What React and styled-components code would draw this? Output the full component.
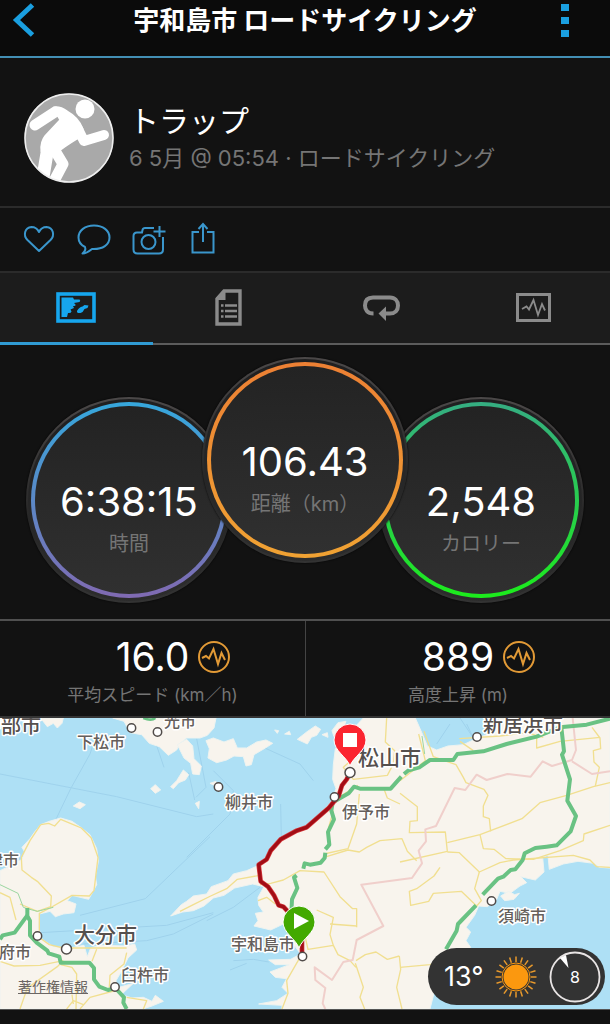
import React, { useState } from "react";
import styled, { createGlobalStyle } from "styled-components";

const GlobalStyle = createGlobalStyle`
  body {
    margin: 0;
    background: #121212;
    font-family: Inter, "Noto Sans CJK JP", sans-serif;
  }

  * {
    box-sizing: border-box;
  }
`;

const Page = styled.main`
  display: flex;
  flex-direction: column;
  min-height: 100vh;
  background: #121212;
  color: #fff;
`;

const IconButton = styled.button`
  display: flex;
  padding: 0;
  border: 0;
  background: none;
  color: ${(props) => props.$color || "#1a9fe0"};
  cursor: pointer;
`;

const Header = styled.header`
  display: grid;
  grid-template-columns: 1fr auto 1fr;
  align-items: start;
  height: 58px;
  padding: 2px 40px 0 12px;
  background: #0b0b0b;
  border-bottom: 2px solid #438fb4;

  ${IconButton}:last-child {
    justify-self: end;
  }
`;

const Title = styled.h1`
  margin: 0 0 0 28px;
  font-size: 26px;
  font-weight: 700;
  line-height: 38px;
`;

const Profile = styled.section`
  display: flex;
  align-items: center;
  gap: 15px;
  height: 150px;
  padding: 12px 24px 0;
  border-bottom: 2px solid #2b2b2b;
`;

const Avatar = styled.svg`
  flex: none;
  width: 90px;
  height: 90px;
`;

const Name = styled.h2`
  margin: 0;
  font-size: 30px;
  font-weight: 400;
  line-height: 40px;
`;

const Subtitle = styled.p`
  margin: 0;
  color: #757575;
  font-size: 22px;
  font-weight: 400;
  line-height: 34px;
`;

const Actions = styled.div`
  display: flex;
  align-items: center;
  gap: 20px;
  height: 65px;
  padding: 0 22px 2px;
  border-bottom: 2px solid #2b2b2b;
`;

const Tabs = styled.div`
  display: grid;
  grid-template-columns: repeat(4, 1fr);
  height: 72px;
  background: #1c1c1c;
  box-shadow: inset 0 -2px #5c5c5c;
`;

const Tab = styled.button`
  display: flex;
  align-items: center;
  justify-content: center;
  padding: 0;
  border: 0;
  border-bottom: 3px solid ${(props) => (props.$active ? "#309bd3" : "transparent")};
  background: none;
  color: ${(props) => (props.$active ? "#16a6ee" : "#8b8b8b")};
  cursor: pointer;
`;

const Dials = styled.section`
  display: flex;
  justify-content: center;
  align-items: flex-end;
  height: 276px;
  padding-bottom: 16px;
  border-bottom: 2px solid #505050;
`;

const Dial = styled.div`
  position: relative;
  z-index: ${(props) => (props.$raised ? 1 : 0)};
  flex: none;
  width: 206px;
  height: 206px;
  margin: 0 -15px ${(props) => (props.$raised ? "40px" : "0")};
  padding: 3px;
  border: 2px solid transparent;
  border-radius: 50%;
  background:
    linear-gradient(#1f1f20, #2c2c2c) padding-box,
    linear-gradient(#4b4848, #262626 60%, #333) border-box;
  box-shadow: 0 0 2px #000;
`;

const Ring = styled.div`
  display: flex;
  flex-direction: column;
  align-items: center;
  height: 100%;
  padding-top: 71px;
  border: 4px solid transparent;
  border-radius: 50%;
  background:
    linear-gradient(#232323, #303030) padding-box,
    linear-gradient(${(props) => props.$from}, ${(props) => props.$to}) border-box;
`;

const DialValue = styled.div`
  font-size: 40px;
  line-height: 50px;
  white-space: nowrap;
`;

const DialLabel = styled.div`
  color: #757575;
  font-size: 20px;
  font-weight: 400;
  line-height: 34px;
  white-space: nowrap;
`;

const Stats = styled.section`
  display: grid;
  grid-template-columns: 1fr 1fr;
  height: 97px;
  border-bottom: 2px solid #343434;
`;

const Stat = styled.div`
  display: flex;
  flex-direction: column;
  align-items: center;
  padding-top: 14px;

  & + & {
    border-left: 1px solid #444;
  }
`;

const StatValue = styled.div`
  position: relative;
  font-size: 39px;
  line-height: 44px;

  svg {
    position: absolute;
    left: 100%;
    top: 6px;
    margin-left: 9px;
  }
`;

const StatLabel = styled.div`
  color: #757575;
  font-size: 17px;
  font-weight: 400;
  line-height: 32px;
`;

const MapArea = styled.section`
  position: relative;
  border-bottom: 1px solid #555;
`;

const MapSvg = styled.svg`
  display: block;
  width: 100%;
  height: auto;
  background: #aee0f5;
`;

const MapText = styled.text`
  fill: ${(props) => (props.$size > 16 ? "#55504e" : "#655f5c")};
  stroke: #fff;
  stroke-width: 3px;
  stroke-linejoin: round;
  paint-order: stroke;
  font-size: ${(props) => props.$size}px;
  font-weight: 500;
`;

const Legal = styled.a`
  position: absolute;
  left: 18px;
  bottom: 12px;
  color: #6b6663;
  font-size: 14px;
  line-height: 20px;
`;

const Weather = styled.div`
  position: absolute;
  right: 5px;
  bottom: 4px;
  display: flex;
  align-items: center;
  justify-content: space-between;
  width: 177px;
  height: 57px;
  padding: 0 4px 0 16px;
  border-radius: 29px;
  background: #333;
  font-size: 27px;
  font-weight: 400;
`;

const Compass = styled.div`
  position: relative;
  display: flex;
  align-items: center;
  justify-content: center;
  width: 52px;
  height: 52px;
  font-size: 16px;

  svg {
    position: absolute;
    inset: 0;
  }
`;

const PulseBadge = () => (
  <svg width="32" height="32" viewBox="0 0 32 32" fill="none" stroke="#e29a36" strokeWidth="2">
    <circle cx="16" cy="16" r="15" />
    <path d="M4 17 L8 15 L11 17.5 L15.500 8 L20 23 L23.500 12 L27 19" />
  </svg>
);

const MapIcon = () => (
  <svg width="40" height="31" viewBox="0 0 40 31">
    <rect x="2" y="2" width="36" height="27" fill="none" stroke="currentColor" strokeWidth="3.600" />
    <path
      fill="currentColor"
      d="M5.500 5.500 H17 L18 7.500 H23.500 Q25 8.500 23.500 10 L18 11 L19.500 12.500 Q20 14 17 14 L18 16 L14.500 17.500 L15.500 19.500 Q15 21.500 12 21 L11 25 H5.500 Z M21 19 Q23 15 26.500 14.500 L28.500 13 L32.500 13.500 L31.500 16 L28.500 17 Q27 20.500 24.500 21 Q20.500 21.500 21 19 Z"
    />
  </svg>
);

const ReportIcon = () => (
  <svg width="27" height="37" viewBox="0 0 27 37" fill="none" stroke="currentColor">
    <path d="M9 2 H25 V35 H2 V10 Z" strokeWidth="3.400" />
    <path d="M10.500 1 V11 H1 V9 Z" fill="currentColor" stroke="none" />
    <path d="M6 16.500 h2.500 M10 16.500 h12 M6 22 h2.500 M10 22 h12 M6 27.500 h2.500 M10 27.500 h12" strokeWidth="2.600" />
  </svg>
);

const LapIcon = () => (
  <svg width="37" height="26" viewBox="0 0 37 26" fill="none" stroke="currentColor">
    <path d="M10.500 18.500 C4 18.500 2 14.500 2 10.500 C2 5 5 2.500 10 2.500 H27 C32 2.500 35 6 35 10.500 C35 15.500 32 18.500 27 18.500 H22" strokeWidth="4" />
    <path d="M15.500 18.500 L23 11.500 V26 Z" fill="currentColor" stroke="none" />
  </svg>
);

const ChartIcon = () => (
  <svg width="35" height="29" viewBox="0 0 35 29" fill="none" stroke="currentColor">
    <rect x="1.500" y="1.500" width="32" height="26" strokeWidth="3" />
    <path d="M6 16 L10.500 13.500 L13 16.500 L17.500 7 L22 22 L26 11 L29 17.500" strokeWidth="1.800" />
  </svg>
);

const cities = [
  { name: "宇部市", x: -19, y: 15, size: 20 },
  { name: "下松市", x: 77, y: 30, dot: [131.500, 10] },
  { name: "光市", x: 164, y: 9, dot: [157.500, 14] },
  { name: "中津市", x: -29, y: 148 },
  { name: "大分市", x: 74, y: 224, size: 21, dot: [66.500, 231], big: true },
  { name: "別府市", x: -17, y: 240, dot: [37.500, 218] },
  { name: "臼杵市", x: 121, y: 263, dot: [115, 269] },
  { name: "柳井市", x: 225, y: 90, dot: [218.500, 69] },
  { name: "宇和島市", x: 231, y: 232, dot: [302.500, 238.500] },
  { name: "伊予市", x: 342, y: 100, dot: [334.500, 79] },
  { name: "松山市", x: 358, y: 47, size: 21, dot: [350, 54.500], big: true },
  { name: "新居浜市", x: 483, y: 14, size: 20, dot: [477, 19] },
  { name: "須崎市", x: 498, y: 204, dot: [491.500, 183] },
];

const land = [
  // Yamaguchi coast
  "M0 12 H52 L40 30 L18 24 L0 34 Z",
  "M100 12 H190 L186 28 L172 42 L160 28 L142 38 L128 20 Z",
  "M338 12 L372 22 L390 56 L425 62 L448 88 L478 98 L505 124 L530 108 L540 88 L560 72 L600 72 L622 64 L642 42 L648 12 Z",
  "M532 92 L560 76 L578 96 L582 134 L604 156 L598 182 L578 180 L572 148 L552 132 Z",
  "M550 168 L566 182 L556 198 L536 206 L520 224 L512 218 L530 200 Z",
  "M452 224 L466 212 L482 228 L466 238 Z M220 276 L238 264 L256 272 L240 284 Z M586 268 L598 262 L596 284 Z",
  "M618 80 L640 72 L672 84 L700 74 L712 102 L740 102 L770 84 L798 78 L818 88 L796 102 L762 122 L754 152 L738 156 L730 128 L702 126 L680 138 L650 146 L624 132 L628 104 Z",
  "M892 76 L920 54 L946 36 L962 46 L950 64 L934 70 L922 90 Z M854 60 l14 -8 4 10 Z M966 62 l16 -6 2 14 Z M824 48 l12 2 -4 8 Z M630 208 l18 -6 4 16 Z",
  "M996 50 l18 -24 24 -4 -10 24 -26 22 Z",
  // Oita
  "M0 470 L38 452 L66 436 L74 414 L66 400 L90 374 L104 354 L122 332 L148 322 L182 312 L216 322 L242 340 L270 362 L290 404 L295 442 L286 486 L290 512 L266 556 L216 544 L202 560 L228 570 L222 596 L190 600 L166 608 L150 592 L118 600 L116 640 L126 676 L160 698 L210 702 L252 694 L262 728 L272 702 L300 694 L378 696 L404 690 L410 708 L384 732 L362 776 L348 800 L350 822 L400 808 L364 842 L396 852 L430 850 L456 862 L466 844 L490 862 L456 876 L428 885 H0 Z",
  // Shikoku
  "M1090 12 L1062 42 L1030 84 L1006 104 L1000 152 L998 196 L1008 224 L996 262 L960 300 L920 340 L842 372 L806 420 L772 456 L740 470 L700 480 L684 500 L634 518 L620 540 L580 546 L560 562 L544 572 L512 606 L548 594 L580 590 L612 576 L640 552 L672 544 L704 522 L758 510 L792 518 L774 550 L776 574 L790 594 L766 598 L774 620 L762 636 L812 648 L850 630 L864 656 L874 682 L902 720 L872 736 L806 738 L826 752 L868 752 L810 774 L826 790 L860 794 L846 820 L864 838 L830 860 L776 870 L846 874 L846 885 H1290 L1304 830 L1350 760 L1412 700 L1398 680 L1412 654 L1398 640 L1424 604 L1436 576 L1462 578 L1490 556 L1500 532 L1530 538 L1560 516 L1580 506 L1562 488 L1606 498 L1632 474 L1628 430 L1644 424 L1648 466 L1690 450 L1734 442 L1782 448 L1798 460 L1830 462 V12 H1500 L1474 56 L1424 76 L1390 92 L1344 96 L1310 108 L1282 96 L1268 62 L1246 12 Z",
  "M1502 546 l24 -14 18 10 14 -4 -16 18 -28 4 Z",
];

const yellowRoads = [
  "M122 332 L146 328 L164 336 L182 316 L220 332 L244 342 L274 372 L294 430 L282 530 L268 546 L216 544 L150 582 L118 598 V650",
  "M122 332 L90 380 L64 430 L66 468 L94 490 L112 502 L154 546 L152 578 L112 592 L60 570",
  "M0 536 L30 550 L48 618 M0 742 L42 756 L120 754 L190 740 M118 660 L120 672 L148 692 L190 702 H380",
  "M290 706 L276 742 M182 748 L172 758 L82 822 L60 885 M182 752 L216 760 L230 780 L228 885 M216 842 L220 870 M200 885 L220 860 L250 872 M352 828 L270 850 L240 885",
  "M380 716 L372 750 L330 784 L328 820 M380 850 L440 860 L430 885",
  "M540 592 L580 572 L632 546 L680 524 L712 496 L780 484 M780 512 L812 508 L850 498 L900 470 L972 474 L1020 548 L1058 584 H1070 V640",
  "M1160 12 L1156 84 L1184 110 L1180 150 L1162 184 L1060 196 L1030 160 L1064 130 M1010 254 L1074 214 M1078 240 L1070 330 L1044 404 L972 420",
  "M972 430 L1044 408 L1078 414 L1100 400 L1140 380 L1206 374 L1222 412 L1250 440",
  "M1150 220 L1162 252 L1200 270 M1200 238 L1252 278 V320 L1230 322 L1228 356 L1336 354 L1342 412 L1200 444",
  "M1256 60 L1276 140 L1200 200 M1272 52 L1300 128 L1368 152 L1390 190 L1398 206 L1452 226 L1464 244 L1450 276 V308 L1468 314 L1472 352",
  "M1342 386 L1440 362 L1566 314 L1620 266 L1700 244 L1780 218 L1830 206",
  "M1440 362 L1450 404 L1482 406 L1518 434 L1600 436 L1680 410 L1750 380 L1752 360 L1830 334",
  "M1342 414 L1378 416 L1438 474 L1500 446 L1540 438 L1720 424 L1770 438 L1790 458 L1830 460",
  "M1438 474 L1424 524 L1444 560 L1430 576 L1384 532 L1300 538 L1286 562 L1232 574 L1228 532 L1250 524 L1302 486 L1320 460",
  "M1378 74 L1500 66 L1580 56 L1630 70 M1610 68 V102 L1680 82 L1800 70 M1776 40 L1800 72 L1802 104 L1780 110 L1782 144 L1798 160 L1786 216 M1420 110 L1380 82",
  "M870 620 L900 600 L924 706 L1000 694 L1014 722 L1050 740 L1068 760 M1000 694 L990 662 L1000 610 L950 588 M990 630 L1070 636",
  "M1068 740 L1096 722 L1128 714 L1162 736 L1198 726 M1198 726 L1202 766 L1190 820 L1206 885 M1066 748 L1090 820 L1080 850 L1094 885",
  "M900 730 L860 800 L864 838 L846 885 M1200 760 L1290 752 L1330 740 M1000 290 L986 340 M774 560 L800 550 L826 570",
];

const greenRoads = [
  "M82 582 V606 L90 620 V664 L110 686 L142 710 L146 718 L178 728 L182 746 H268 L282 762 V796 L298 818 L324 828 L346 822 L372 850 L370 866 L380 885",
  "M82 604 L44 656 L8 664 L0 676",
  "M1004 262 L1046 238 L1062 218 L1080 224 H1172 L1204 188 M1212 180 L1224 170 L1258 160 L1290 138 H1360 L1372 120 L1450 112 L1520 90 L1610 68 L1680 40 L1760 32 L1830 14",
  "M1684 40 L1692 112 L1686 122 L1710 196 L1702 260 L1728 306 L1712 352 L1670 394 L1640 398 L1606 402 L1574 418 L1568 438 L1546 466 L1532 468 L1510 488 L1494 494 L1448 542",
  "M1428 574 L1374 630 L1370 650 L1338 706",
  "M998 266 L994 290 L1002 316 L984 354 L988 392 L976 406 M976 416 L974 432 L962 446 L930 452 L914 448 L910 464 M890 484 L882 490 L892 522 L876 556 L874 600",
];

const borders =
  "M976 885 L968 868 L976 822 L946 798 L944 760 L996 798 L1030 744 L1058 738 L1070 678 L1150 636 L1084 512 L1236 492 L1266 448 L1256 410 L1278 382 L1276 346 L1308 336 L1364 222 L1396 228 L1430 182 L1460 198 L1522 180 L1592 188 L1628 142 L1656 156 L1716 138 L1728 108 L1718 12 M1716 142 L1776 180 L1830 172";

const ferries =
  "M0 180 L350 248 L590 308 L640 300 M290 60 L270 120 L212 224 L164 324 M470 95 L492 160 M566 176 L584 258 M590 74 L618 220 L588 250 M630 368 L436 554 L240 604 M120 656 L500 634 L640 596 M250 690 L440 680 L520 660 L640 600 M640 170 L700 230 L690 300 L560 430 M842 270 L844 372 M846 376 L866 400 M790 100 L900 150 L940 200 M700 740 L760 736 L806 744 M690 768 L740 748 M780 520 L700 580 L620 620 M1310 90 L1350 30 M1400 30 L1420 72 L1380 12";

const ride = "M1050 176 L1040 196 L1026 214 L1016 246 L986 282 L920 340 L890 350 L842 376 L812 410 L800 436 L776 452 L782 502 L804 518 L822 544 L836 574 L850 578 L880 610 L906 680 L906 722";

const Pin = ({ x, y, color, children }) => (
  <g transform={`translate(${x} ${y})`}>
    <path d="M0 0 C-3 -9 -16 -15 -16 -26 A16 16 0 0 1 16 -26 C16 -15 3 -9 0 0 Z" fill={color} stroke="#fff" />
    {children}
  </g>
);

const RouteMap = () => (
  <MapSvg viewBox="0 0 610 291" role="img" aria-label="ルート">
    <g transform="translate(0 -4) scale(.33333)" fill="none" strokeLinejoin="round">
      <path d={ferries} stroke="#9fd2ec" strokeWidth="3" />
      {land.map((d) => (
        <path key={d} d={d} fill="#f8f4ed" stroke="#eef3f0" strokeWidth="3" />
      ))}
      {yellowRoads.map((d) => (
        <path key={d} d={d} stroke="#f1df90" strokeWidth="4" />
      ))}
      <path d="M0 512 L54 538 L70 580 L82 584 M82 584 L112 592 L160 580 M1266 66 L1274 120" stroke="#9bd6a1" strokeWidth="3" />
      <path d={borders} stroke="#f0cfcb" strokeWidth="6" />
      {greenRoads.map((d) => (
        <path key={d} d={d} stroke="#69c283" strokeWidth="12" />
      ))}
      <path d="M430 12 q24 10 36 0" stroke="#69c283" strokeWidth="8" />
      <path d={ride} stroke="#d63c3f" strokeWidth="14" />
      <path d={ride} stroke="#a20d16" strokeWidth="10" />
    </g>
    {cities.map((city) => (
      <g key={city.name}>
        {city.dot && (
          <circle cx={city.dot[0]} cy={city.dot[1]} r={city.big ? 5 : 4.2} fill="#fff" stroke="#514c4a" strokeWidth="1.500" />
        )}
        <MapText x={city.x} y={city.y} $size={city.size || 16}>{city.name}</MapText>
      </g>
    ))}
    <Pin x="350" y="48" color="#fb2530">
      <rect x="-7" y="-33" width="14" height="14" fill="#fff" />
    </Pin>
    <Pin x="299" y="230" color="#43a900">
      <path d="M-5 -35 L10 -27 L-5 -19 Z" fill="#fff" />
    </Pin>
  </MapSvg>
);

const tabs = [
  { id: "map", label: "マップ", Icon: MapIcon },
  { id: "report", label: "詳細", Icon: ReportIcon },
  { id: "laps", label: "ラップ", Icon: LapIcon },
  { id: "charts", label: "チャート", Icon: ChartIcon },
];

const dials = [
  { value: "6:38:15", label: "時間", from: "#36a7dc", to: "#806ab2" },
  { value: "106.43", label: "距離（km）", from: "#ec8034", to: "#f0a233", raised: true },
  { value: "2,548", label: "カロリー", from: "#35ad82", to: "#1cec1c" },
];

const stats = [
  { value: "16.0", label: "平均スピード (km／h)" },
  { value: "889", label: "高度上昇 (m)" },
];

const rays = Array.from({ length: 20 }, (_, i) => i * 18);

const App = () => {
  const [active, setActive] = useState("map");

  return (
    <>
      <GlobalStyle />
      <Page>
        <Header>
          <IconButton type="button" aria-label="戻る">
            <svg width="24" height="36" viewBox="0 0 24 36" fill="none" stroke="currentColor" strokeWidth="5">
              <path d="M20.500 3 L4.500 18 L20.500 33" />
            </svg>
          </IconButton>
          <Title>宇和島市 ロードサイクリング</Title>
          <IconButton type="button" aria-label="メニュー">
            <svg width="10" height="36" viewBox="0 0 10 36" fill="currentColor">
              <path d="M1 2 h8 v7 h-8 Z M1 15 h8 v7 h-8 Z M1 28 h8 v7 h-8 Z" />
            </svg>
          </IconButton>
        </Header>

        <Profile>
          <Avatar viewBox="0 0 90 90">
            <clipPath id="avatar">
              <circle cx="45" cy="45" r="44" />
            </clipPath>
            <circle cx="45" cy="45" r="44.500" fill="#a9a9a9" />
            <g clipPath="url(#avatar)" fill="#fff" stroke="#fff" strokeLinejoin="round" strokeLinecap="round">
              <circle cx="61" cy="16" r="9.500" stroke="none" />
              <path d="M11 32 L31 19" fill="none" strokeWidth="11" />
              <path d="M30 15 Q36 14 43 19 Q54 25 58 36 L57 43 Q49 47 35 57 L29 62 L18 58 Q17 49 22 43 L37 27 Z" strokeWidth="3" />
              <path d="M54 36 L60 48 L80 42" fill="none" strokeWidth="10" />
              <path d="M24 54 L18 90" fill="none" strokeWidth="13" />
              <path d="M30 56 L39 71 L30 88" fill="none" strokeWidth="11" />
            </g>
            <circle cx="45" cy="45" r="44" fill="none" stroke="#eee" strokeWidth="1.500" />
          </Avatar>
          <div>
            <Name>トラップ</Name>
            <Subtitle>6 5月 @ 05:54 · ロードサイクリング</Subtitle>
          </div>
        </Profile>

        <Actions>
          <IconButton type="button" aria-label="いいね" $color="#3a96cc">
            <svg width="34" height="34" viewBox="0 0 34 34" fill="none" stroke="currentColor" strokeWidth="2">
              <path d="M17 29 L5.500 18 C1 13.500 2.500 5.500 9.500 5 C13 5 15.500 7 17 10 C18.500 7 21 5 24.500 5 C31.500 5.500 33 13.500 28.500 18 Z" strokeLinejoin="round" />
            </svg>
          </IconButton>
          <IconButton type="button" aria-label="コメント" $color="#3a96cc">
            <svg width="36" height="34" viewBox="0 0 36 34" fill="none" stroke="currentColor" strokeWidth="2">
              <path d="M6.500 31.500 C9 29.500 10 27.500 9 25 C5 23 2.500 19.500 2.500 15.500 C2.500 8.500 9 3.500 18 3.500 C27 3.500 33.500 8.500 33.500 15.500 C33.500 22.500 27 27.500 16 27 C13 29.500 10 31.500 6.500 31.500 Z" strokeLinejoin="round" />
            </svg>
          </IconButton>
          <IconButton type="button" aria-label="写真を追加" $color="#3a96cc">
            <svg width="34" height="34" viewBox="0 0 34 34" fill="none" stroke="currentColor" strokeWidth="2">
              <path d="M22 6 H13 Q11 6 10.500 8 L10 10.500 H5 Q1.500 10.500 1.500 14 V27.500 Q1.500 31.500 5.500 31.500 H27 Q31 31.500 31 27.500 V15" />
              <circle cx="16.500" cy="20" r="7" />
              <path d="M27.500 4 V15 M21.500 9.500 H33.500" />
            </svg>
          </IconButton>
          <IconButton type="button" aria-label="共有" $color="#3a96cc">
            <svg width="34" height="34" viewBox="0 0 34 34" fill="none" stroke="currentColor" strokeWidth="2">
              <path d="M13 10 H6.500 V30.500 H27.500 V10 H21 M17 20 V2 M12.500 7 L17 2 L21.500 7" />
            </svg>
          </IconButton>
        </Actions>

        <Tabs role="tablist">
          {tabs.map(({ id, label, Icon }) => (
            <Tab
              key={id}
              type="button"
              role="tab"
              aria-label={label}
              aria-selected={active === id}
              $active={active === id}
              onClick={() => setActive(id)}
            >
              <Icon />
            </Tab>
          ))}
        </Tabs>

        <Dials>
          {dials.map((dial) => (
            <Dial key={dial.label} $raised={dial.raised}>
              <Ring $from={dial.from} $to={dial.to}>
                <DialValue>{dial.value}</DialValue>
                <DialLabel>{dial.label}</DialLabel>
              </Ring>
            </Dial>
          ))}
        </Dials>

        <Stats>
          {stats.map((stat) => (
            <Stat key={stat.label}>
              <StatValue>
                {stat.value}
                <PulseBadge />
              </StatValue>
              <StatLabel>{stat.label}</StatLabel>
            </Stat>
          ))}
        </Stats>

        <MapArea>
          <RouteMap />
          <Legal href="#legal">著作権情報</Legal>
          <Weather>
            <span>13°</span>
            <svg width="42" height="42" viewBox="-21 -21 42 42">
              <circle r="14" fill="none" stroke="#fb980f" />
              <circle r="12.500" fill="#fb980f" />
              {rays.map((angle) => (
                <path key={angle} d="M0 -15 V-20.500" stroke="#e99a2c" strokeWidth="1.500" transform={`rotate(${angle})`} />
              ))}
            </svg>
            <Compass>
              <svg width="52" height="52" viewBox="0 0 52 52">
                <circle cx="26" cy="26" r="24.500" fill="none" stroke="#e8e4e4" strokeWidth="1.800" />
                <path d="M11 7 L17 4 L19.500 17 Z" fill="#fff" />
              </svg>
              8
            </Compass>
          </Weather>
        </MapArea>
      </Page>
    </>
  );
};

export default App;
